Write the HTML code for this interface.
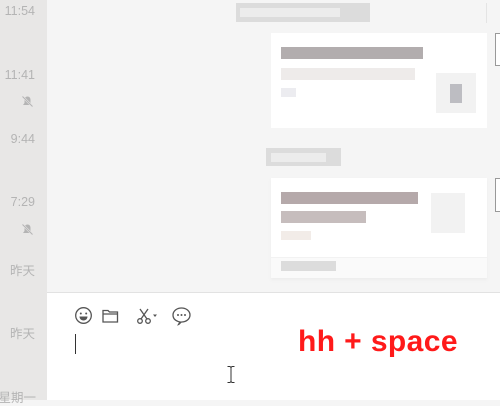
<!DOCTYPE html>
<html><head><meta charset="utf-8"><style>
*{margin:0;padding:0;box-sizing:border-box}
body{width:500px;height:400px;overflow:hidden;position:relative;background:#f5f5f5;font-family:"Liberation Sans","Noto Sans CJK SC",sans-serif}
.side{position:absolute;left:0;top:0;width:47px;height:400px;background:#e8e7e6}
.t{position:absolute;right:12px;font-size:12.5px;color:#b4b4b4;text-align:right;white-space:nowrap}
.b{position:absolute}
.card{position:absolute;left:271px;width:216px;background:#fff}
.pill{position:absolute;background:#dcdcdc}
.bar{position:absolute;height:12px}
.input{position:absolute;left:47px;top:292px;width:453px;height:108px;background:#fff;border-top:1px solid #e2e2e2}
</style></head><body>
<div class="side">
<div class="t" style="top:4px">11:54</div>
<div class="t" style="top:68px">11:41</div>
<svg class="b" style="left:21px;top:95px" width="13" height="13" viewBox="0 0 13 13"><path d="M6.5 1.5C4.5 1.5 3.5 3 3.5 5V8L2 10H11L9.5 8V5C9.5 3 8.5 1.5 6.5 1.5Z M5 11h3" fill="#b4b4b4"/><path d="M1.5 1.5L11.5 11.5" stroke="#e8e7e6" stroke-width="2"/><path d="M1.5 1.5L11.5 11.5" stroke="#b4b4b4" stroke-width="1"/></svg>
<div class="t" style="top:132px">9:44</div>
<div class="t" style="top:195px">7:29</div>
<svg class="b" style="left:21px;top:223px" width="13" height="13" viewBox="0 0 13 13"><path d="M6.5 1.5C4.5 1.5 3.5 3 3.5 5V8L2 10H11L9.5 8V5C9.5 3 8.5 1.5 6.5 1.5Z M5 11h3" fill="#b4b4b4"/><path d="M1.5 1.5L11.5 11.5" stroke="#e8e7e6" stroke-width="2"/><path d="M1.5 1.5L11.5 11.5" stroke="#b4b4b4" stroke-width="1"/></svg>
<div class="t" style="top:260px">昨天</div>
<div class="t" style="top:323px">昨天</div>
<div class="t" style="top:387px;right:11px">星期一</div>
</div>

<div class="pill" style="left:236px;top:3px;width:134px;height:19px"></div>
<div class="b" style="left:240px;top:8px;width:100px;height:9px;background:#ececec"></div>
<div class="card" style="top:33px;height:95px">
<div class="bar" style="left:10px;top:14px;width:142px;background:#b2adae"></div>
<div class="bar" style="left:10px;top:35px;width:134px;background:#eeebea"></div>
<div class="bar" style="left:10px;top:55px;width:15px;height:9px;background:#ececf0"></div>
<div class="b" style="left:165px;top:40px;width:40px;height:40px;background:#f2f2f2"></div>
<div class="b" style="left:179px;top:51px;width:12px;height:19px;background:#bdbdc2"></div>
</div>
<div class="b" style="left:486px;top:3px;width:1px;height:20px;background:#e4e4e4"></div>
<div class="b" style="left:495px;top:33px;width:5px;height:33px;border:1px solid #999;border-right:none;background:#fff"></div>

<div class="pill" style="left:266px;top:148px;width:75px;height:18px"></div>
<div class="b" style="left:271px;top:153px;width:55px;height:9px;background:#ececec"></div>
<div class="card" style="top:178px;height:100px;box-shadow:0 2px 3px #ececec">
<div class="bar" style="left:10px;top:14px;width:137px;background:#b5a9aa"></div>
<div class="bar" style="left:10px;top:33px;width:85px;background:#c6bdbd"></div>
<div class="bar" style="left:10px;top:53px;width:30px;height:9px;background:#f2ece8"></div>
<div class="b" style="left:160px;top:15px;width:34px;height:40px;background:#f2f2f2"></div>
<div class="b" style="left:0;top:79px;width:216px;height:21px;background:#fafafa;border-top:1px solid #f2f2f2"></div>
<div class="bar" style="left:10px;top:83px;width:55px;height:10px;background:#dcdcdc"></div>
</div>
<div class="b" style="left:495px;top:178px;width:5px;height:34px;border:1px solid #999;border-right:none;background:#fff"></div>

<div class="input">
<svg class="b" style="left:27px;top:13px" width="150" height="20" viewBox="0 0 150 20">
<g fill="none" stroke="#555" stroke-width="1.3">
<circle cx="9.5" cy="9.5" r="7.8"/>
<path d="M29 4.5h5l1.5 1.5h8v10h-14.5z M29 8h14.5"/>
<path d="M66 3l7 10 M74 3l-7 10"/><circle cx="66" cy="15" r="2.3"/><circle cx="74" cy="15" r="2.3"/>
<path d="M106 16c-4.5-1-7-3.5-7-7 0-4 3.8-7 8.5-7s8.5 3 8.5 7-3.8 7-8.5 7c-1 0-1.5 2-3 2.5z"/>
</g>
<circle cx="6.8" cy="7.5" r="1" fill="#555"/><circle cx="12.2" cy="7.5" r="1" fill="#555"/>
<path d="M5.5 10.5h8c0 2.5-2 4-4 4s-4-1.5-4-4z" fill="#555"/>
<path d="M79 8.5h4l-2 2.5z" fill="#555"/>
<circle cx="104" cy="9" r="1" fill="#555"/><circle cx="107.5" cy="9" r="1" fill="#555"/><circle cx="111" cy="9" r="1" fill="#555"/>
</svg>
<div class="b" style="left:28px;top:41px;width:1px;height:20px;background:#333"></div>
<svg class="b" style="left:180px;top:73px" width="8" height="17" viewBox="0 0 8 17"><path d="M0.5 0.5h2.5l1 1 1-1h2.5M4 1.5v14M0.5 16.5h2.5l1-1 1 1h2.5" fill="none" stroke="#333" stroke-width="1"/></svg>
<div class="b" style="left:251px;top:32px;font-size:30px;font-weight:bold;color:#ff1a1a;letter-spacing:0.4px;white-space:nowrap">hh + space</div>
</div>
</body></html>
